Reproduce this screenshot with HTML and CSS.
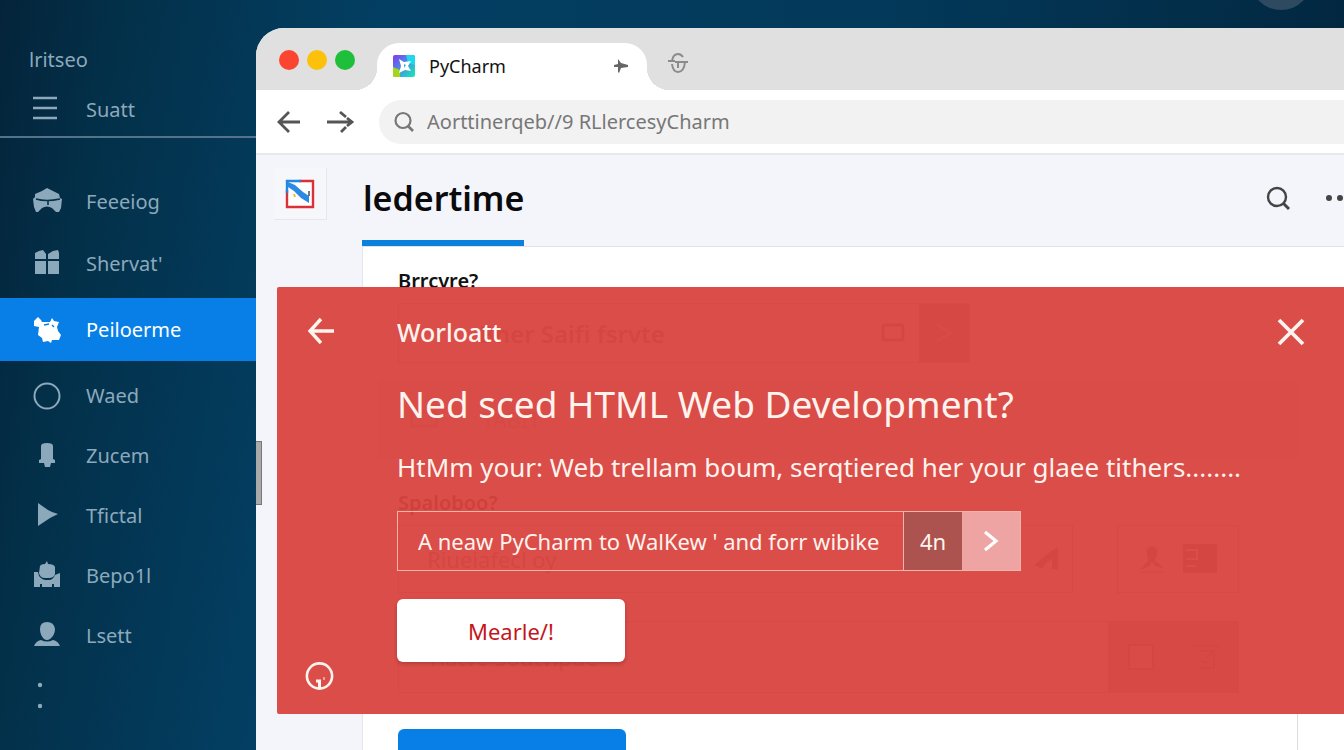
FILE: index.html
```html
<!DOCTYPE html>
<html lang="en">
<head>
    <meta charset="UTF-8">
    <title>PyCharm</title>
    <link rel="stylesheet" href="styles.css">
</head>
<body>
    <div class="avatar"></div>

    <nav class="sidebar">
        <div class="sidebar-head">
            <div class="brand">lritseo</div>
            <button class="menu-button">
                <svg class="icon" viewBox="0 0 32 32"><path d="M2 5h24M2 15h24M2 25h24" fill="none" stroke="currentColor" stroke-width="2.4"/></svg>
                Suatt
            </button>
        </div>
        <a href="#" class="nav-item tall">
            <svg class="icon" viewBox="0 0 32 32"><path d="M4 9l7-3 5-3 6 3 6 3 1 4 2 1-1 9-2 4h-3l-4-4q-5-3-10 0l-4 4H5l-2-5-1-8 2-2z" fill="currentColor"/><path d="M5 14q10 3 24 0M17 16v4" fill="none" stroke="#053149" stroke-width="1.6"/></svg>
            Feeeiog
        </a>
        <a href="#" class="nav-item tall">
            <svg class="icon" viewBox="0 0 32 32"><path d="M4 12V6l4-2 4-1 3 4v5zM17 12V7l5-3 5-1 1 3v6zM4 14h11v13H4zM17 14h11v13H17z" fill="currentColor"/></svg>
            Shervat'
        </a>
        <a href="#" class="nav-item active">
            <svg class="icon" viewBox="0 0 32 32"><path d="M3 7l4-4 3 3 1 2h8l2-4 2 3 5 1-2 5 1 4 3 4-2 5h-7l-1 3-3-2-5 1-1-4-4-3 1-8-5-1z" fill="currentColor"/><path d="M13 11l5-1M21 11l2 2" stroke="#087fe6" stroke-width="1.4"/></svg>
            Peiloerme
        </a>
        <a href="#" class="nav-item">
            <svg class="icon" viewBox="0 0 32 32"><circle cx="16" cy="17" r="12.5" fill="none" stroke="currentColor" stroke-width="2"/></svg>
            Waed
        </a>
        <a href="#" class="nav-item">
            <svg class="icon" viewBox="0 0 32 32"><path d="M10 20V7q0-3 6-3t6 3v13l2 1v3h-4l-1 4h-5l-1-4H8v-3z" fill="currentColor"/></svg>
            Zucem
        </a>
        <a href="#" class="nav-item">
            <svg class="icon" viewBox="0 0 32 32"><path d="M7 4l10 7 4 2 6 2-8 4L7 27z" fill="currentColor"/></svg>
            Tfictal
        </a>
        <a href="#" class="nav-item">
            <svg class="icon" viewBox="0 0 32 32"><path d="M9 7q1-2 5-2l2-3 1 3q6 0 7 3v7q-1 4-6 4h-4q-5 0-6-5zM3 13h4l1 4q3 4 7 4h3q4 0 6-5l5-2v14h-6v-3h-2v3H11v-3H9v3H3z" fill="currentColor"/></svg>
            Bepo1l
        </a>
        <a href="#" class="nav-item">
            <svg class="icon" viewBox="0 0 32 32"><path d="M9 10q0-7 7-7t8 7q0 6-5 10-3 2-6 0-4-4-4-10zM3 27q2-5 7-6 6 3 12 0 5 1 7 6z" fill="currentColor"/></svg>
            Lsett
        </a>
        <svg class="more-dots" viewBox="0 0 10 30"><circle cx="5" cy="4" r="2.2" fill="currentColor"/><circle cx="5" cy="25" r="2.2" fill="currentColor"/></svg>
    </nav>

    <div class="browser">
        <div class="tab-strip">
            <div class="lights">
                <span class="light red"></span>
                <span class="light yellow"></span>
                <span class="light green"></span>
            </div>
            <div class="tab">
                <svg class="favicon" viewBox="0 0 22 22">
                    <defs>
                        <linearGradient id="fav" x1="0" y1="0" x2="1" y2="1">
                            <stop offset="0" stop-color="#8a35ee"/><stop offset=".45" stop-color="#4b8be8"/><stop offset="1" stop-color="#12eeb0"/>
                        </linearGradient>
                    </defs>
                    <rect width="22" height="22" rx="2" fill="url(#fav)"/>
                    <path d="M0 12l7 3v7H2q-2 0-2-2z" fill="#a5d51c"/>
                    <path d="M13 0h7q2 0 2 2v8l-7-2z" fill="#20d8ec"/>
                    <path d="M6 4l5 3 7-1-3 5 3 5-6-1-6 3 2-7z" fill="#fff"/>
                    <path d="M11 9l2 1-2 3z" fill="#41a9e8"/>
                </svg>
                <span class="tab-title">PyCharm</span>
                <button class="tab-button" aria-label="Pin tab">
                    <svg viewBox="0 0 16 16"><path d="M5 1l3 4 7 2v2l-7 1-2 5-1-1V9H1V7l4-1z" fill="currentColor"/></svg>
                </button>
            </div>
            <button class="new-tab" aria-label="New tab">
                <svg viewBox="0 0 22 22"><path d="M16 5q-2-3-5-3-5 0-6 7M1 9h7M12 10h9M5 12q1 8 6 8 6 0 7-10M11 10v6M8 10h7" fill="none" stroke="currentColor" stroke-width="2"/></svg>
            </button>
        </div>

        <div class="toolbar">
            <button class="tool-button" aria-label="Back">
                <svg viewBox="0 0 28 28"><path d="M25 14H4M14 4L4 14l10 10" fill="none" stroke="currentColor" stroke-width="2.8"/></svg>
            </button>
            <button class="tool-button" aria-label="Forward">
                <svg viewBox="0 0 28 28"><path d="M0 14h25M13 4l6 5M20 10l5 4-5 4M19 19l-5 5" fill="none" stroke="currentColor" stroke-width="2.8"/></svg>
            </button>
            <label class="address">
                <svg viewBox="0 0 22 22"><circle cx="10" cy="9.5" r="7.5" fill="none" stroke="currentColor" stroke-width="2.2"/><path d="M15 15l5 5" stroke="currentColor" stroke-width="2.6"/></svg>
                <input type="text" aria-label="Address" value="Aorttinerqeb//9 RLlercesyCharm">
            </label>
        </div>

        <div class="page">
            <div class="rail">
                <a href="#" class="logo" aria-label="Home">
                    <svg viewBox="0 0 30 30"><path d="M2 11v17h26V2H14" fill="#fff" stroke="#dc3038" stroke-width="2.4"/><path d="M2 14V2h14" fill="none" stroke="#2187df" stroke-width="2.4"/><path d="M3 3l7 3 8 7 6 4v7l-8-5-7-7-6-4z" fill="#2b8be4"/><path d="M24 12v5" stroke="#345" stroke-width="1.4"/><path d="M9 15l1 3" stroke="#f1c022" stroke-width="2"/></svg>
                </a>
            </div>

            <main class="main">
                <header class="page-header">
                    <h1>ledertime</h1>
                    <button class="header-button search" aria-label="Search">
                        <svg viewBox="0 0 26 26"><circle cx="11" cy="11" r="9" fill="none" stroke="currentColor" stroke-width="2.4"/><path d="M17 17l6 6" stroke="currentColor" stroke-width="3"/></svg>
                    </button>
                    <button class="header-button more" aria-label="More">
                        <svg viewBox="0 0 30 26"><circle cx="5" cy="12" r="3" fill="currentColor"/><circle cx="16" cy="12" r="3" fill="currentColor"/><circle cx="27" cy="12" r="3" fill="currentColor"/></svg>
                    </button>
                </header>

                <div class="card">
                    <form class="form">
                        <label class="form-label" for="source">Brrcvre?</label>
                        <div class="field short">
                            <input id="source" type="text" value="Bner Saifi fsrvte">
                            <svg class="field-icon" viewBox="0 0 28 28"><rect x="4" y="6" width="20" height="15" rx="2" fill="none" stroke="currentColor" stroke-width="3"/></svg>
                            <button type="button" class="field-go" aria-label="Go">
                                <svg viewBox="0 0 24 24"><path d="M5 4l14 8-14 8" fill="none" stroke="currentColor" stroke-width="2"/></svg>
                            </button>
                        </div>
                        <div class="band">
                            <svg class="field-icon" viewBox="0 0 32 24"><rect x="2" y="4" width="28" height="16" fill="none" stroke="currentColor" stroke-width="3"/></svg>
                            <span>TABIT</span>
                        </div>
                        <label class="form-label" for="option">Spaloboo?</label>
                        <div class="field-row">
                            <div class="field">
                                <input id="option" type="text" value="Riueiafecl oy">
                                <svg class="field-icon" viewBox="0 0 28 28"><path d="M2 20L18 7l8-5v23l-6-1V14l-6 4-4 6z" fill="currentColor"/></svg>
                            </div>
                            <div class="field tools">
                                <svg class="field-icon" viewBox="0 0 28 28"><path d="M9 7q0-5 5-5t5 5-3 8l9 8-8-3-3-4-3 5-8 3 8-9q-2-3-2-8zM1 27h26" fill="currentColor" stroke="currentColor"/></svg>
                                <svg class="field-icon wide" viewBox="0 0 36 32"><rect x="1" y="1" width="34" height="29" rx="2" fill="currentColor"/><path d="M4 7h11v9H4M4 23h10" fill="none" stroke="#fff" stroke-width="2"/></svg>
                            </div>
                        </div>
                        <div class="field last">
                            <input type="text" aria-label="Name" value="Tiatve Soutvipue">
                            <div class="field-tools">
                                <svg class="field-icon" viewBox="0 0 28 28"><rect x="2" y="2" width="24" height="24" fill="#ccc" stroke="currentColor" stroke-width="2"/></svg>
                                <svg class="field-icon" viewBox="0 0 28 28"><path d="M1 3h26M8 8h14l-8 7M22 8v18M7 25h12M9 18l8 2" fill="none" stroke="currentColor" stroke-width="2"/></svg>
                            </div>
                        </div>
                        <button type="button" class="submit" aria-label="Submit"></button>
                    </form>
                    <aside class="side-panel"></aside>
                </div>
            </main>

            <section class="banner">
                <div class="banner-side">
                    <button class="banner-icon" aria-label="Back">
                        <svg viewBox="0 0 30 30"><path d="M29 15H5M16 3L5 15l11 12" fill="none" stroke="currentColor" stroke-width="3.4"/></svg>
                    </button>
                    <button class="banner-icon" aria-label="Info">
                        <svg viewBox="0 0 30 30"><circle cx="14.5" cy="14" r="12.6" fill="none" stroke="currentColor" stroke-width="2.6"/><path d="M11 19h3.500v7" fill="none" stroke="currentColor" stroke-width="3"/><path d="M19 15v3" stroke="currentColor" stroke-width="1"/></svg>
                    </button>
                </div>
                <div class="banner-body">
                    <div class="banner-top">
                        <h3>Worloatt</h3>
                        <button class="banner-icon" aria-label="Close">
                            <svg viewBox="0 0 30 30"><path d="M3 3l24 24M27 3L3 27" stroke="currentColor" stroke-width="3.8"/></svg>
                        </button>
                    </div>
                    <h2>Ned sced HTML Web Development?</h2>
                    <p>HtMm your: Web trellam boum, serqtiered her your glaee tithers........</p>
                    <div class="banner-field">
                        <input type="text" aria-label="Project" value="A neaw PyCharm to WalKew ' and forr wibike">
                        <button class="lang">4n</button>
                        <button class="go" aria-label="Go">
                            <svg viewBox="0 0 20 24"><path d="M4 3l11 9-11 9" fill="none" stroke="currentColor" stroke-width="3.2"/></svg>
                        </button>
                    </div>
                    <button class="banner-button">Mearle/!</button>
                </div>
            </section>

            <div class="scroll-thumb"></div>
        </div>
    </div>
</body>
</html>
```
FILE: styles.css
```css
* {
    box-sizing: border-box;
}

body {
    font-family: "Noto Sans", "Open Sans", sans-serif;
    font-size: 22px;
    margin: 0;
    height: 100vh;
    display: flex;
    overflow: hidden;
    position: relative;
    background: linear-gradient(100deg, #04243a 0, #033049 120px, #033f63 380px, #03395a 60%, #02233a 100%);
}

button,
input {
    font-family: inherit;
    font-size: inherit;
    color: inherit;
    background: none;
    border: none;
    padding: 0;
    margin: 0;
}

button {
    cursor: pointer;
    display: flex;
    align-items: center;
    justify-content: center;
}

input {
    flex: 1;
    min-width: 0;
    outline: none;
}

a {
    color: inherit;
    text-decoration: none;
}

h1, h2, h3, p {
    margin: 0;
}

svg {
    display: block;
    flex: none;
}

.avatar {
    position: absolute;
    top: -52px;
    right: 32px;
    width: 62px;
    height: 62px;
    border-radius: 50%;
    background-color: #2d4a60;
}

/* Sidebar */
.sidebar {
    flex: none;
    width: 256px;
    font-size: 20px;
    color: #8ca9bc;
}

.sidebar-head {
    padding-top: 44px;
    margin-bottom: 32px;
    border-bottom: 2px solid #527389;
}

.brand {
    line-height: 32px;
    padding-left: 29px;
}

.menu-button,
.nav-item {
    display: flex;
    align-items: center;
    justify-content: flex-start;
    gap: 23px;
    padding-left: 31px;
}

.menu-button {
    height: 60px;
    padding-top: 6px;
}

.nav-item {
    height: 60px;
}

.nav-item.tall {
    height: 62px;
}

.nav-item.active {
    height: 63px;
    margin: 4px 0;
    color: #fff;
    background-color: #087fe6;
}

.icon {
    width: 32px;
    height: 32px;
}

.more-dots {
    width: 10px;
    height: 30px;
    margin: 16px 0 0 35px;
}

/* Browser window */
.browser {
    flex: 1;
    min-width: 0;
    display: flex;
    flex-direction: column;
    margin-top: 28px;
    border-radius: 28px 0 0 0;
    overflow: hidden;
    background-color: #fff;
}

.tab-strip {
    flex: none;
    display: flex;
    height: 62px;
    background-color: #e0e0e0;
}

.lights {
    display: flex;
    align-items: center;
    gap: 8px;
    padding: 2px 22px 0 23px;
}

.light {
    width: 20px;
    height: 20px;
    border-radius: 50%;
}

.light.red { background-color: #fb4531; }
.light.yellow { background-color: #fdc00b; }
.light.green { background-color: #1fbf3c; }

.tab {
    position: relative;
    display: flex;
    align-items: center;
    width: 270px;
    margin-top: 15px;
    padding: 0 18px 2px 16px;
    border-radius: 22px 22px 0 0;
    color: #111;
    background-color: #fff;
}

.tab::before,
.tab::after {
    content: "";
    position: absolute;
    bottom: 0;
    width: 22px;
    height: 22px;
}

.tab::before {
    right: 100%;
    background: radial-gradient(circle at 0 0, transparent 22px, #fff 22px);
}

.tab::after {
    left: 100%;
    background: radial-gradient(circle at 100% 0, transparent 22px, #fff 22px);
}

.favicon {
    width: 22px;
    height: 22px;
}

.tab-title {
    flex: 1;
    padding-left: 14px;
    font-size: 18px;
}

.tab-button {
    color: #666;
}

.tab-button svg {
    width: 16px;
    height: 16px;
}

.new-tab {
    margin-left: 20px;
    padding-top: 8px;
    color: #8b8b8b;
}

.new-tab svg {
    width: 22px;
    height: 22px;
}

.toolbar {
    flex: none;
    display: flex;
    align-items: center;
    gap: 24px;
    height: 65px;
    padding-left: 19px;
    border-bottom: 2px solid #e6e8ea;
    color: #555;
}

.tool-button svg {
    width: 28px;
    height: 28px;
}

.address {
    flex: 1;
    display: flex;
    align-items: center;
    gap: 12px;
    height: 44px;
    padding-left: 14px;
    border-radius: 22px 0 0 22px;
    font-size: 20px;
    color: #777;
    background-color: #f2f2f2;
}

.address svg {
    width: 22px;
    height: 22px;
}

/* Page */
.page {
    position: relative;
    flex: 1;
    display: flex;
    background-color: #f3f5fa;
}

.rail {
    flex: none;
    width: 106px;
    padding: 13px 18px;
}

.logo {
    display: flex;
    align-items: center;
    justify-content: center;
    width: 53px;
    height: 52px;
    border-right: 1px solid #e4e7ec;
    border-bottom: 1px solid #e4e7ec;
    background-color: #f6f7fb;
}

.logo svg {
    width: 30px;
    height: 30px;
}

.main {
    flex: 1;
    min-width: 0;
}

.page-header {
    display: flex;
    align-items: center;
    height: 92px;
    border-bottom: 1px solid #e0e3e9;
    color: #444;
}

h1 {
    height: 91px;
    padding-left: 1px;
    border-bottom: 6px solid #0b80dc;
    font-size: 34px;
    font-weight: 600;
    line-height: 86px;
    color: #0b0b0d;
    margin-right: auto;
}

.header-button svg {
    height: 26px;
}

.header-button {
    padding-bottom: 4px;
}

.search {
    margin-right: 32px;
}

.more {
    margin-right: -10px;
}

.card {
    display: flex;
    border-left: 1px solid #e3e6ea;
    background-color: #fff;
}

.form {
    flex: 1;
    min-width: 0;
    padding: 18px 58px 0 35px;
}

.form-label {
    display: block;
    margin-bottom: 6px;
    font-size: 20px;
    font-weight: 600;
    line-height: 32px;
    color: #111;
}

.field {
    flex: 1;
    display: flex;
    align-items: center;
    height: 68px;
    padding-left: 28px;
    border: 1px solid #c4b4b4;
    color: #777;
}

.field.short {
    width: 572px;
    max-width: 100%;
    height: 60px;
    padding-left: 80px;
    font-size: 24px;
}

.field.short input {
    font-weight: 600;
}

.field-icon {
    width: 28px;
    height: 28px;
}

.field-icon.wide {
    width: 36px;
    height: 32px;
}

.field-go {
    width: 50px;
    height: 58px;
    margin-left: 12px;
    color: #ddd;
    background-color: #999;
}

.field-go svg {
    width: 24px;
    height: 24px;
}

.band {
    display: flex;
    align-items: center;
    gap: 44px;
    height: 80px;
    margin: 16px -58px 28px -20px;
    padding-left: 32px;
    color: #aaa;
    background-color: #e8e8e8;
}

.field-row {
    display: flex;
    gap: 44px;
    margin-bottom: 28px;
}

.field-row .field {
    padding-right: 12px;
}

.field.tools {
    flex: none;
    width: 122px;
    justify-content: space-around;
    padding-left: 12px;
}

.field.last {
    height: 72px;
}

.field-tools {
    display: flex;
    align-items: center;
    justify-content: space-around;
    width: 130px;
    height: 100%;
    color: #777;
    background-color: #b4b4b4;
}

.submit {
    width: 228px;
    height: 64px;
    margin-top: 36px;
    border-radius: 6px;
    background-color: #087fe6;
}

.side-panel {
    width: 47px;
    margin-top: 358px;
    border-top: 1px solid #ddd;
    border-left: 1px solid #ddd;
}

/* Red banner over the form */
.banner {
    position: absolute;
    top: 132px;
    left: 21px;
    right: 0;
    display: flex;
    color: #fff3ee;
    background-color: rgba(217, 67, 62, 0.95);
    border-radius: 2px 0 0 2px;
}

.banner-side {
    display: flex;
    flex-direction: column;
    justify-content: space-between;
    align-items: flex-start;
    width: 120px;
    padding: 29px 28px 22px;
}

.banner-icon svg {
    width: 30px;
    height: 30px;
}

.banner-body {
    flex: 1;
    min-width: 0;
    padding: 23px 38px 52px 0;
}

.banner-top {
    display: flex;
    justify-content: space-between;
    align-items: center;
    height: 44px;
}

h3 {
    font-size: 25px;
    font-weight: 500;
}

h2 {
    margin-top: 20px;
    font-size: 37px;
    font-weight: 400;
    line-height: 60px;
}

.banner p {
    margin: 16px 0 27px;
    font-size: 26px;
    line-height: 34px;
    white-space: nowrap;
}

.banner-field {
    display: flex;
    width: 624px;
    max-width: 100%;
    height: 60px;
    margin-bottom: 28px;
    border: 1px solid #f6b3ac;
}

.banner-field input {
    padding-left: 20px;
}

.lang {
    width: 59px;
    border-left: 1px solid #f6b3ac;
    background-color: #ac5350;
}

.go {
    width: 58px;
    color: #fff;
    background-color: #efa4a4;
}

.go svg {
    width: 20px;
    height: 24px;
}

.banner-button {
    width: 228px;
    height: 63px;
    border-radius: 6px;
    color: #c4161c;
    background-color: #fff;
    box-shadow: 0 2px 4px rgba(0, 0, 0, 0.2);
}

.scroll-thumb {
    position: absolute;
    top: 286px;
    left: 0;
    width: 6px;
    height: 64px;
    border: 1px solid #777;
    border-left: none;
    background-color: #aaa;
}
```
